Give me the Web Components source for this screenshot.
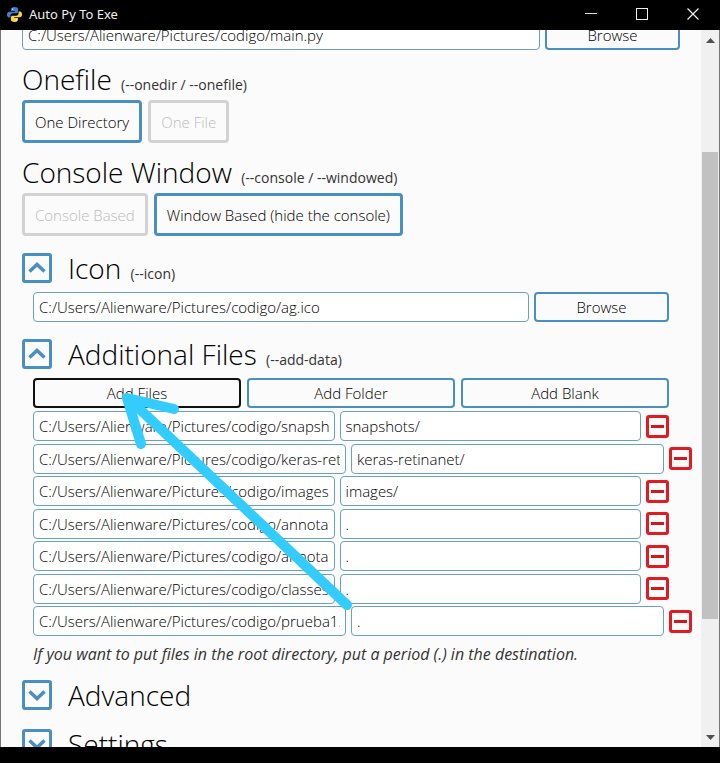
<!DOCTYPE html>
<html lang="en">
<head>
<meta charset="utf-8">
<title>Auto Py To Exe</title>
<style>
  html, body { height: 100%; margin: 0; }
  body { background: #000; font-family: "Open Sans", "Noto Sans", sans-serif; font-weight: 300; color: #000; overflow: hidden; }
</style>
</head>
<body>
<app-window>
  <title-bar slot="bar">Auto Py To Exe</title-bar>

  <path-row class="script" value="C:/Users/Alienware/Pictures/codigo/main.py" label="Script location"></path-row>

  <option-section heading="Onefile" flag="(--onedir / --onefile)">
    <choice-button active>One Directory</choice-button>
    <choice-button>One File</choice-button>
  </option-section>

  <option-section heading="Console Window" flag="(--console / --windowed)">
    <choice-button>Console Based</choice-button>
    <choice-button active>Window Based (hide the console)</choice-button>
  </option-section>

  <fold-section heading="Icon" flag="(--icon)" open>
    <path-row value="C:/Users/Alienware/Pictures/codigo/ag.ico" label="Icon file"></path-row>
  </fold-section>

  <fold-section heading="Additional Files" flag="(--add-data)" open>
    <add-bar></add-bar>
    <file-list>
      <file-row source="C:/Users/Alienware/Pictures/codigo/snapshots" target="snapshots/"></file-row>
      <file-row wide source="C:/Users/Alienware/Pictures/codigo/keras-retinanet" target="keras-retinanet/"></file-row>
      <file-row source="C:/Users/Alienware/Pictures/codigo/images" target="images/"></file-row>
      <file-row source="C:/Users/Alienware/Pictures/codigo/annotations.csv" target="."></file-row>
      <file-row source="C:/Users/Alienware/Pictures/codigo/annotations_test.csv" target="."></file-row>
      <file-row source="C:/Users/Alienware/Pictures/codigo/classes.csv" target="."></file-row>
      <file-row wide source="C:/Users/Alienware/Pictures/codigo/prueba1.py" target="."></file-row>
    </file-list>
    <hint-text>If you want to put files in the root directory, put a period (.) in the destination.</hint-text>
  </fold-section>

  <fold-section heading="Advanced"></fold-section>
  <fold-section heading="Settings"></fold-section>

  <scroll-track slot="scroll"></scroll-track>
  <pointer-arrow slot="overlay"></pointer-arrow>
</app-window>

<script>
const define = (name, render) => customElements.define(name, class extends HTMLElement {
  connectedCallback() {
    if (this.shadowRoot) return;
    this.attachShadow({ mode: "open" }).innerHTML = render(this);
  }
});
const attr = (el, name) => el.getAttribute(name) || "";

const control = `
  * { box-sizing: border-box; }
  button, input { font: inherit; font-size: 15px; line-height: 20px; color: #000; margin: 0; height: 30px; border-radius: 4px; }
  input { min-width: 0; padding: 0 5px; border: 1px solid #6ba0c4; background: #fff; outline: 0; }
  button { padding: 0 8px; border: 2px solid #4a8fc2; background: #fbfbfb; cursor: pointer; }
`;
const headingCss = `
  h2 { margin: 0; font-size: 28px; line-height: 34px; font-weight: inherit; color: #000; white-space: nowrap; }
  small { font-size: 14px; line-height: 20px; font-weight: 400; margin-left: 2px; color: #333; }
`;

define("app-window", () => `
  <style>
    :host { display: grid; grid-template-rows: 30px minmax(0, 1fr) 16px; height: 100vh; }
    .body { position: relative; display: grid; grid-template-columns: minmax(0, 1fr) 18px; background: #fbfbfb;
      border-left: 1px solid #777; border-right: 1px solid #777; }
    main { overflow: hidden; min-height: 0; padding: 0 21px; }
    /* the page is scrolled: the first row starts above the visible edge */
    .scrolled { margin-top: -10px; }
  </style>
  <slot name="bar"></slot>
  <div class="body">
    <main><div class="scrolled"><slot></slot></div></main>
    <slot name="scroll"></slot>
  </div>
  <slot name="overlay"></slot>`);

define("title-bar", () => `
  <style>
    :host { display: flex; align-items: center; background: #000; color: #eee; font: 400 13px "Noto Sans", sans-serif; padding: 0 2px 2px 7px; }
    .logo { width: 15px; height: 15px; margin-right: 7px; }
    span { flex: 1; line-height: 28px; }
    button { width: 51px; height: 28px; padding: 0; border: 0; background: none; display: grid; place-items: center; }
    svg { display: block; }
  </style>
  <svg class="logo" viewBox="0 0 24 24" aria-hidden="true">
    <path fill="#3f7fd0" d="M11.9 0C8 0 6.500 1.500 6.500 3.500V6.500h6v1H3.500C1.300 7.500 0 9.300 0 12s1.200 4.700 3.400 4.700H5.500V13.500c0-2 1.600-3.500 3.500-3.500h6c1.700 0 2.800-1.300 2.800-3V3.500C17.800 1.300 15.500 0 11.900 0Z"/>
    <circle cx="9" cy="3.400" r="1.100" fill="#fff"/>
    <path fill="#ffd43b" d="M12.100 24c3.900 0 5.400-1.500 5.400-3.500v-3h-6v-1h9c2.200 0 3.500-1.800 3.500-4.500s-1.200-4.700-3.400-4.700h-2.100v3.200c0 2-1.600 3.500-3.500 3.500H9c-1.700 0-2.800 1.300-2.800 3v3.500C6.200 22.700 8.500 24 12.100 24Z"/>
    <circle cx="15" cy="20.600" r="1.100" fill="#fff"/>
  </svg>
  <span><slot></slot></span>
  <button aria-label="Minimize"><svg width="12" height="12"><path d="M0 5.500h12" stroke="#ddd"/></svg></button>
  <button aria-label="Maximize"><svg width="12" height="12"><rect x=".5" y=".5" width="11" height="11" fill="none" stroke="#eee"/></svg></button>
  <button aria-label="Close"><svg width="12" height="12"><path d="M.5.5l11 11M11.500.5l-11 11" stroke="#eee" stroke-width="1.200"/></svg></button>`);

define("path-row", el => `
  <style>${control}
    :host { display: grid; grid-template-columns: minmax(0, 1fr) 135px; gap: 5px; }
    :host(.script) { margin-bottom: 12px; }
  </style>
  <input aria-label="${attr(el, "label")}" value="${attr(el, "value")}">
  <button>Browse</button>`);

define("option-section", el => `
  <style>${headingCss}
    :host { display: block; margin-bottom: 12px; }
    .choices { display: flex; gap: 6px; margin-top: 4px; }
  </style>
  <h2>${attr(el, "heading")} <small>${attr(el, "flag")}</small></h2>
  <div class="choices"><slot></slot></div>`);

define("choice-button", () => `
  <style>${control}
    button { height: 43px; padding: 0 10px; border: 3px solid #d2d2d2; color: #bbb; white-space: nowrap; }
    :host([active]) button { border-color: #4a8fc2; color: #000; }
  </style>
  <button><slot></slot></button>`);

define("fold-section", el => {
  const open = el.hasAttribute("open");
  return `
  <style>${headingCss}
    :host { display: block; padding-top: 3px; margin-bottom: 12px; }
    header { display: flex; align-items: center; gap: 16px; }
    .toggle { width: 30px; height: 30px; padding: 0; border: 3px solid #4a8fc2; border-radius: 3px; background: #fbfbfb; display: grid; place-items: center; }
    .content { padding: 0 11px; margin-top: 7px; }
    :host(:not([open])) .content { display: none; }
  </style>
  <header>
    <button class="toggle" aria-label="Toggle ${attr(el, "heading")}" aria-expanded="${open}">
      <svg width="20" height="20" fill="none" stroke="#4a8fc2" stroke-width="3.600"><path d="${open ? "M2.500 13.500 10 6.500l7.500 7" : "M2.500 6.500 10 13.500l7.500-7"}"/></svg>
    </button>
    <h2>${attr(el, "heading")} <small>${attr(el, "flag")}</small></h2>
  </header>
  <div class="content"><slot></slot></div>`;
});

define("add-bar", () => `
  <style>${control}
    :host { display: grid; grid-template-columns: repeat(3, minmax(0, 1fr)); gap: 6px; margin-bottom: 3px; }
    .focus { border-color: #111; }
  </style>
  <button class="focus">Add Files</button><button>Add Folder</button><button>Add Blank</button>`);

define("file-list", () => `
  <style>:host { display: flex; flex-direction: column; justify-content: space-between; min-height: 225px; }</style>
  <slot></slot>`);

define("file-row", el => `
  <style>${control}
    :host { display: grid; grid-template-columns: minmax(0, 1fr) minmax(0, 1fr) 23px; gap: 5px; align-items: center; }
    :host([wide]) { margin-right: -23px; }
    .remove { width: 23px; height: 23px; padding: 0; border: 3px solid #e01b22; border-radius: 3px; display: grid; place-items: center; }
  </style>
  <input aria-label="Source" value="${attr(el, "source")}">
  <input aria-label="Destination" value="${attr(el, "target")}">
  <button class="remove" aria-label="Remove"><svg width="13" height="3"><path d="M0 1.500h13" stroke="#d0181f" stroke-width="3"/></svg></button>`);

define("hint-text", () => `
  <style>:host { display: block; margin-top: 9px; font-size: 16px; line-height: 18px; font-weight: 400; font-style: italic; color: #333; white-space: nowrap; }</style>
  <slot></slot>`);

define("scroll-track", () => `
  <style>
    :host { display: grid; grid-template-rows: 20px 102px 467px 1fr 20px; justify-items: center; background: #f0f0f0; }
    svg { align-self: center; }
    .thumb { grid-row: 3; width: 16px; background: #c1c1c1; }
    .down { grid-row: 5; }
  </style>
  <svg width="9" height="5"><path d="M0 5 4.500 0 9 5z" fill="#505050"/></svg>
  <div class="thumb"></div>
  <svg class="down" width="9" height="5"><path d="M0 0 4.500 5 9 0z" fill="#505050"/></svg>`);

define("pointer-arrow", () => `
  <style>
    :host { position: absolute; left: 118px; top: 388px; pointer-events: none; }
    svg { display: block; }
  </style>
  <svg width="240" height="226" fill="none" stroke="#33ccff" stroke-linecap="round" stroke-linejoin="round" aria-hidden="true">
    <path d="M229 217 11 11" stroke-width="10"/>
    <path d="M56 21 9 10l14 46" stroke-width="10"/>
  </svg>`);
</script>
</body>
</html>
